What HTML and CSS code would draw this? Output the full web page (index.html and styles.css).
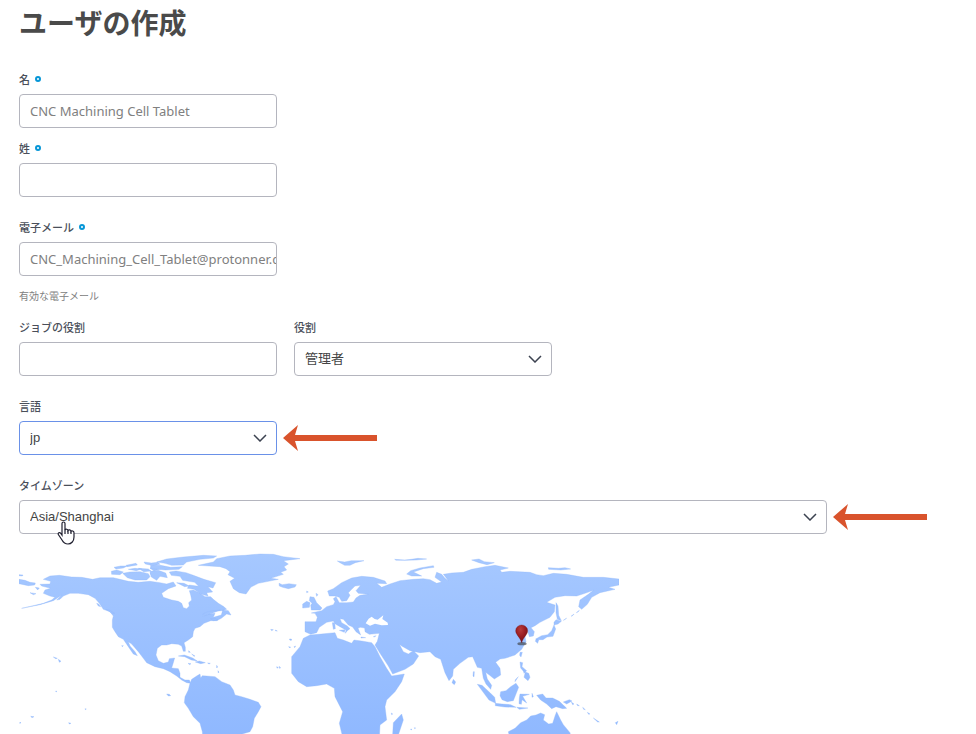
FILE: index.html
```html
<!DOCTYPE html>
<html lang="ja">
<head>
<meta charset="utf-8">
<meta name="viewport" content="width=device-width, initial-scale=1">
<title>ユーザの作成</title>
<link rel="stylesheet" href="styles.css">
</head>
<body>
<main class="page">
<h1 class="title">ユーザの作成</h1>
<form class="form">
  <div class="names">
    <div class="field">
      <label class="label required" for="first">名</label>
      <input class="control" id="first" type="text" value="CNC Machining Cell Tablet">
    </div>
    <div class="field">
      <label class="label required" for="last">姓</label>
      <input class="control" id="last" type="text">
    </div>
  </div>
  <div class="field">
    <label class="label required" for="email">電子メール</label>
    <input class="control" id="email" type="text" value="CNC_Machining_Cell_Tablet@protonner.com">
    <p class="help">有効な電子メール</p>
  </div>
  <div class="row">
    <div class="field">
      <label class="label" for="job">ジョブの役割</label>
      <input class="control" id="job" type="text">
    </div>
    <div class="field">
      <label class="label" for="role">役割</label>
      <div class="select">
        <select class="control" id="role"><option>管理者</option></select>
        <svg class="chevron" viewBox="0 0 14 8"><path d="M1 1l6 6 6-6"/></svg>
      </div>
    </div>
  </div>
  <div class="field">
    <label class="label" for="lang">言語</label>
    <div class="line">
      <div class="select">
        <select class="control active" id="lang"><option>jp</option></select>
        <svg class="chevron" viewBox="0 0 14 8"><path d="M1 1l6 6 6-6"/></svg>
      </div>
      <svg class="arrow" viewBox="0 0 94 28"><path d="M0 14L15 1l-3 10h82v6H12l3 10z"/></svg>
    </div>
  </div>
  <div class="field">
    <label class="label" for="zone">タイムゾーン</label>
    <div class="line">
      <div class="select wide">
        <select class="control" id="zone"><option>Asia/Shanghai</option></select>
        <svg class="chevron" viewBox="0 0 14 8"><path d="M1 1l6 6 6-6"/></svg>
        <svg class="pointer" viewBox="0 0 18 24"><path d="M5 14V2.500C5 .5 8 .5 8 2.500V9c.5-1.200 3-1 3 .5.600-1 3-.8 3 .8.700-.8 3-.4 3 1.500V16c0 4-2.500 7-6 7-3 0-4.500-1.200-6-4l-3.500-5.200c-1-1.800 1-3 2.300-1.500z"/><path d="M8 8.500V13M11 9.500V13M14 10.500V13"/></svg>
      </div>
      <svg class="arrow" viewBox="0 0 94 28"><path d="M0 14L15 1l-3 10h82v6H12l3 10z"/></svg>
    </div>
  </div>
</form>
<div class="map">
<svg class="world" viewBox="57 0 1800 900" role="img" aria-label="Asia/Shanghai">
  <defs>
    <linearGradient id="land" gradientUnits="userSpaceOnUse" x1="0" y1="40" x2="0" y2="600"><stop offset="0" stop-color="#a6c8ff"/><stop offset="1" stop-color="#8fb8ff"/></linearGradient>
    <radialGradient id="red" cx=".4" cy=".25" r=".8"><stop offset="0" stop-color="#b83a3a"/><stop offset=".5" stop-color="#981c20"/><stop offset="1" stop-color="#6d1014"/></radialGradient>
  </defs>
  <g class="land">
    <!-- North America -->
    <path d="M130 118L150 108 178 106 215 111 245 112 278 118 300 113 340 113 360 118 385 124 415 127 450 124 480 128 500 132 520 126 528 138 505 146 485 160 490 172 515 180 535 184 545 190 550 203 560 206 568 198 566 188 575 180 572 165 568 152 580 150 600 160 615 170 632 170 640 178 655 190 672 200 680 208 665 212 640 214 620 218 608 228 625 222 645 220 640 232 664 225 668 210 685 212 693 225 680 222 664 235 650 242 632 242 612 250 600 260 585 265 580 275 578 290 565 300 552 308 556 322 556 334 550 334 545 318 535 313 515 311 500 315 485 315 472 325 468 345 475 362 490 370 505 366 508 356 524 354 520 368 515 384 535 386 540 400 540 412 555 420 568 420 572 430 560 428 545 420 530 408 510 395 490 386 465 380 440 368 430 355 415 335 395 312 385 305 390 318 405 335 412 347 400 342 385 320 370 298 355 290 345 275 337 262 337 240 340 228 330 215 310 208 298 190 285 175 265 164 235 160 210 160 190 168 180 178 170 180 185 165 160 182 120 194 65 205 100 197 130 190 155 180 165 172 150 168 130 160 135 150 152 145 125 138 120 133 150 132 152 124Z"/>
    <path d="M57 118L75 121 90 127 106 129 104 135 85 137 57 131ZM57 104l12 1-2 3-10-1zM106 142l12 2-5 6zM90 158l18 3-8 3zM318 208l12 3 14 9-8 0zM290 190l6 2 6 8-7-2z"/>
    <!-- Arctic islands -->
    <path d="M334 94L350 90 370 96 360 104 335 103ZM368 100L390 96 420 95 445 101 450 110 440 120 405 120 382 113ZM342 82l20-4 20 0-12 6-22 3zM378 76l30-6 4 5-30 5zM385 88l20-3 20 2-16 5zM415 85l30 2 8 6-22 2zM432 66l22 3 20-2 6 6-20 4-24-5zM450 84l20-6 14 7-22 8zM450 98l18-2 18 6-12 10-20-4z"/>
    <g transform="translate(450)"><path d="M20 66L50 57 100 51 160 46 200 48 190 54 150 58 110 66 100 75 65 76 45 70ZM2 76l30 0 30 6 35-2-10 8-40 2-45-4zM0 94l25-3 22 8 5 14-22-4-10 12-16-10zM58 96l20-3 30 5 22 8 32 12 35 10-8 16-15-4 14 16-18 2 4 10-22-6-20-14-20-3 6-10 28 4-12-12-36-6-8-12-26-3zM80 128l22 2 16 8-14 2zM158 222l18-8 35-4-25 10-24 8zM182 236l15 0 7 4-14 2z"/>
    <!-- Greenland -->
    <path d="M145 76L190 66 200 56 240 48 285 46 330 42 370 43 400 50 450 56 400 62 415 72 402 80 410 90 392 97 400 103 362 115 385 118 325 130 303 141 288 162 268 158 250 146 240 124 254 115 234 104 240 95 228 86 210 80Z"/>
    <path d="M387 130l10 4 20-3 22 3-4 7-20 5-17-4-10-4z"/>
    <!-- Caribbean -->
    <path d="M85 348l18-3 25 9 14 9-18-3-20-10zM136 366l12-3 18 5-14 3zM114 370l9 1-4 3zM173 369l8 1-4 2zM116 332l5 5-5 0zM125 342l10 6-3 1zM200 376l3 5-3 3zM204 392l3 5-3 1zM50 462l8 1 4 4-7 1zM362 268l8 1-5 3zM376 270l6 3-5 0zM380 380l5 2-4 3zM388 379l4 5-4 1zM420 297l6 3-6 1z"/>
    <!-- South America -->
    <path d="M120 430L125 418 140 408 150 402 152 414 157 407 170 408 195 410 215 425 240 435 250 450 255 465 275 470 300 478 325 487 333 500 325 515 313 535 308 560 300 575 270 584 250 610 160 620 157 575 150 550 130 530 115 505 103 488 105 470 115 450Z"/></g>
    <!-- Europe and Asia -->
    <path d="M915 245L948 245 952 232 945 220 934 219 965 212 980 200 1000 194 1005 185 1000 176 1008 170 1018 188 1040 188 1060 186 1068 174 1080 166 1105 163 1075 160 1068 152 1082 136 1065 138 1055 148 1045 158 1050 166 1040 182 1025 184 1018 172 1005 168 988 168 983 153 1000 146 1025 128 1055 114 1085 109 1120 112 1155 123 1160 131 1130 130 1145 142 1170 132 1200 122 1240 118 1270 116 1290 119 1310 130 1325 126 1305 112 1310 97 1325 103 1335 115 1345 122 1330 103 1355 99 1390 97 1415 88 1455 80 1485 76 1525 84 1500 90 1505 97 1530 94 1590 97 1610 104 1630 107 1660 100 1700 103 1750 112 1810 112 1857 117 1857 135 1825 142 1845 148 1800 158 1775 172 1762 193 1745 208 1736 200 1740 180 1765 163 1780 151 1755 160 1730 168 1695 167 1665 172 1640 187 1665 195 1663 215 1650 232 1620 247 1605 257 1593 263 1603 275 1600 288 1588 290 1582 270 1565 266 1575 290 1578 305 1565 328 1545 345 1515 355 1500 357 1487 367 1500 385 1502 405 1483 417 1468 405 1457 397 1462 417 1475 436 1472 448 1458 432 1450 415 1445 385 1432 382 1418 350 1405 352 1380 370 1360 388 1358 408 1347 422 1335 398 1322 358 1305 350 1290 335 1260 338 1230 332 1205 318 1198 313 1210 335 1225 342 1240 332 1256 348 1240 372 1215 388 1178 402 1165 378 1140 340 1125 315 1132 304 1138 280 1108 283 1095 275 1094 264 1082 262 1074 264 1082 285 1068 275 1058 261 1045 255 1030 238 1020 236 1025 248 1042 258 1050 266 1042 272 1036 280 1038 270 1020 260 1006 252 1000 243 980 247 958 262 950 278 932 283 915 275Z"/>
    <g transform="translate(840)"><path d="M90 170l12 2 8 16 16 16-5 6-27 0-2-14 4-6-8-8zM68 192l12-8 10 4-2 14-20 2zM108 160l6 4-4 5zM80 153l5 3-5 2zM172 63l22 3 20-4 38 0-26 6-16 8-16 0-14-8zM178 271l17-2-2 8zM157 248l7 0 2 18-6 2zM243 291l14 2-14 1zM280 290l8-3-4 4zM344 58l30 2 20-2 20-3 26 2-30 3-30 1-32 0z"/>
    <path d="M380 102L392 92 420 84 460 77 462 82 430 86 400 96 425 108 395 108Z"/>
    <!-- Africa and Madagascar -->
    <path d="M90 285L115 283 165 278 172 295 190 300 215 310 222 300 245 303 275 308 285 320 300 350 320 385 335 408 373 402 365 425 345 455 320 480 315 500 320 540 300 555 297 620 195 620 178 550 188 515 165 470 163 445 140 432 110 437 80 440 55 425 35 400 35 350 60 320 70 295Z"/>
    <path d="M365 522L370 540 362 564 350 600 338 582 340 548ZM28 297l7 1-5 2zM26 320l6 1-3 3zM42 320l5-2-3 5zM334 519l4 3-3 2zM392 567l4 1-3 2zM403 563l4 1-3 2z"/></g>
    <!-- Southeast Asia -->
    <g transform="translate(1200)"><path d="M215 60l22-3 16 8 30 3-22 6-24-6zM160 418l7 8-4 8-7-6zM232 433l14 3 24 22 14 14 3 18-20-10zM286 490l20 2 26 2 16 8-34-1-28-4zM302 455l16-3 14-12 16-10 8 12-8 20-8 20-18 3-16-6-6-12zM360 462l28 1-20 6 12 20-14-10-2 14-7-2 1-18zM360 366l8 2-2 12 14 12-6 6-12-14zM360 337l7 0-4 14-4-5zM355 410l-10 15 1-6zM376 396l10 4 4 12-6 10-12-10zM370 390l5 2-3 8zM350 502l34 2-26 4zM220 395l3 0-1 16-3-3zM396 460l4 10-4 2z"/></g>
    <g transform="translate(1500)"><path d="M168 188l6 10 2 28 8 16-12-4-4-20zM162 247l6-8 16 5-10 8-12 3zM162 255l5 12-8 22-18 2-12 8-18 0-4-2 18-10 18-3 12-12zM108 298l8 2-3 10-7-6zM200 234l-10 7 6-3zM222 222l-9 7 6-3zM238 211l-9 7 6-3zM145 83l30 2 20-2 17 4-30 3-36-2z"/>
    <path d="M110 466L128 462 138 474 158 474 178 484 200 505 188 506 168 500 155 506 140 492 122 480ZM190 486l18-7 8 4-16 9zM214 486l8 6-4 2zM230 492l8 5-5 0zM248 502l8 7-5-1zM262 517l8 5-4 1zM280 534l18 12-5 0zM346 548l8-4-4 10z"/>
    <!-- Australia -->
    <path d="M25 575L45 565 62 548 80 540 92 528 108 525 122 519 134 524 130 540 146 552 158 550 165 528 170 515 182 540 190 554 210 578 220 620 35 620Z"/></g>
    <path d="M160 351l12 4-5 1zM175 358l8 6-5 3zM92 529l10 1-6 3zM206 548l7 2-5 2zM167 453l4 1-3 2zM255 506l4 1-3 2zM60 546l3 3-4 1zM365 317l5 0-3 3z"/>
  </g>
  <path class="sea" d="M1097 250L1106 236 1115 230 1124 237 1133 239 1150 226 1147 237 1163 248 1164 255 1145 256 1125 251 1110 257Z"/>
  <ellipse class="shade" cx="1566" cy="311" rx="14" ry="5"/>
  <path class="pin" d="M1565 308C1560 291 1547 284 1547 272a18 17 0 0 1 36 0c0 12-13 19-18 36z"/>
</svg>
</div>
</main>
</body>
</html>
```
FILE: styles.css
```css
*, *::after { box-sizing: border-box; }

body {
  margin: 0;
  background: #fff;
  color: #4a4a4a;
  font-family: "Liberation Sans", "Noto Sans CJK JP", sans-serif;
}

.page {
  display: flex;
  flex-direction: column;
  height: 100vh;
  padding: 2px 19px 0;
  overflow: hidden;
}

.title {
  margin: 0 0 29px;
  font: bold 28px/40px "Noto Sans CJK JP", sans-serif;
}

.form, .names { display: flex; flex-direction: column; }
.form { gap: 22px; }
.names { gap: 12px; }
.row { display: flex; gap: 17px; margin-top: -7px; }
.field { display: flex; flex-direction: column; gap: 7px; }

.label {
  display: flex;
  align-items: center;
  gap: 5px;
  color: #4a4f5a;
  font: 500 11px/16px "Noto Sans CJK JP", sans-serif;
}

.required::after {
  content: "";
  width: 6px;
  height: 6px;
  border: 2px solid #0696d7;
  border-radius: 50%;
}

.control {
  display: block;
  width: 258px;
  height: 34px;
  padding: 0 0 0 10px;
  border: 1px solid #b4b5be;
  border-radius: 4px;
  outline: 0;
  background: #fff;
  color: #808080;
  font: 400 13px/20px "Noto Sans", "Noto Sans CJK JP", sans-serif;
}

select.control {
  appearance: none;
  color: #444;
  font: 13px/20px "Liberation Sans", "Noto Sans CJK JP", sans-serif;
}

.active { border-color: #6a91e8; }

.help {
  margin: 5px 0 0;
  color: #808080;
  font: 400 10px/16px "Noto Sans CJK JP", sans-serif;
}

.line { display: flex; align-items: center; gap: 6px; }
.select { position: relative; }
.wide { flex: 0 1 808px; }
.wide .control { width: 100%; }

.chevron {
  position: absolute;
  top: 13px;
  right: 10px;
  width: 14px;
  height: 8px;
  fill: none;
  stroke: #3c4250;
  stroke-width: 1.5;
  pointer-events: none;
}

.arrow {
  flex: none;
  width: 94px;
  height: 28px;
  fill: #d9532c;
}

.pointer {
  position: absolute;
  top: 21px;
  left: 38px;
  width: 18px;
  height: 24px;
  fill: #fff;
  stroke: #202030;
  stroke-width: 1.2;
  pointer-events: none;
}

.map {
  flex: 1;
  min-height: 0;
  margin-top: 6px;
  overflow: hidden;
}

.world { display: block; width: 100%; max-width: 600px; }
.land { fill: url(#land); stroke: #8fb5fa; stroke-width: 1; stroke-linejoin: round; }
.sea { fill: #fff; }
.shade { fill: #333; opacity: .6; }
.pin { fill: url(#red); stroke: #6d1014; stroke-width: 1; }
```
